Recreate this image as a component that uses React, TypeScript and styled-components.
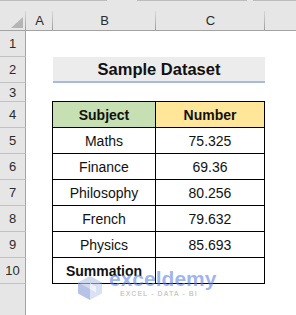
import styled, { createGlobalStyle } from 'styled-components';

const Global = createGlobalStyle`
	html, body {
		margin: 0;
		padding: 0;
		background: #ffffff;
	}
	body {
		width: 296px;
		height: 315px;
		overflow: hidden;
		font-family: 'Liberation Sans', Arial, sans-serif;
	}
`

const Sheet = styled.div`
	position: relative;
	display: grid;
	grid-template-columns: 26px 27px 103px 109px 1fr;
	grid-template-rows: 1px 30px 26px 26px 19px repeat(7, 26px) 1fr;
	width: 296px;
	height: 315px;
	overflow: hidden;
`

const TopStrip = styled.div`
	grid-column: 1 / -1;
	grid-row: 1;
	display: flex;
	background: #e6e6e6;
`

const Segment = styled.div<{ $w: number; $gap?: boolean }>`
	width: ${p => p.$w}px;
	flex: ${p => p.$w ? 'none' : '1'};
	background: ${p => p.$gap ? '#e6e6e6' : '#bcbcbc'};
`

const ColHead = styled.div<{ $col: number; $sep?: boolean }>`
	grid-row: 2;
	grid-column: ${p => p.$col};
	position: relative;
	box-sizing: border-box;
	background: #e6e6e6;
	border-bottom: 1px solid #a3a3a3;
	display: flex;
	align-items: center;
	justify-content: center;
	padding-top: 10px;
	font-size: 13px;
	color: #2b2b2b;

	&::after {
		content: '';
		display: ${p => p.$sep === false ? 'none' : 'block'};
		position: absolute;
		right: 0;
		top: 10px;
		bottom: 0;
		width: 1px;
		background: linear-gradient(#d8d8d8, #9e9e9e);
	}
`

const Corner = styled(ColHead)`
	justify-content: flex-end;
	align-items: flex-end;
	padding: 0 3px 2px 0;
`

const Triangle = styled.div`
	width: 12px;
	height: 11px;
	background: #b5b5b5;
	clip-path: polygon(100% 0, 100% 100%, 0 100%);
`

const RowHead = styled.div<{ $row: number; $last?: boolean }>`
	grid-column: 1;
	grid-row: ${p => p.$row};
	box-sizing: border-box;
	background: #e6e6e6;
	border-right: 1px solid #a3a3a3;
	border-bottom: ${p => p.$last ? 'none' : '1px solid #c2c2c2'};
	display: flex;
	align-items: center;
	justify-content: center;
	font-size: 13px;
	color: #2b2b2b;
`

const Title = styled.div`
	grid-column: 3 / 5;
	grid-row: 4;
	box-sizing: border-box;
	background: #ececec;
	border-bottom: 2px solid #a7b9e2;
	display: flex;
	align-items: center;
	justify-content: center;
	font-size: 16.5px;
	font-weight: 700;
	color: #111;
	padding-top: 1px;
`

const Table = styled.div`
	grid-column: 3 / 5;
	grid-row: 6 / 13;
	margin: -1px 0 0 -1px;
	display: grid;
	grid-template-columns: 103px 109px;
	grid-template-rows: repeat(7, 26px);
	border-top: 1px solid #000;
	border-left: 1px solid #000;
`

const Cell = styled.div<{ $bg?: string; $bold?: boolean }>`
	box-sizing: border-box;
	border-right: 1px solid #000;
	border-bottom: 1px solid #000;
	background: ${p => p.$bg || '#ffffff'};
	display: flex;
	align-items: center;
	justify-content: center;
	font-size: 14px;
	font-weight: ${p => p.$bold ? 700 : 400};
	color: #111;
	padding-top: 1px;
`

const Watermark = styled.div`
	position: absolute;
	left: 77px;
	top: 267px;
	display: flex;
	align-items: flex-start;
	gap: 6px;
	pointer-events: none;
`

const Logo = styled.svg`
	margin-top: 8px;
	flex: none;
`

const Brand = styled.div`
	display: flex;
	flex-direction: column;
	align-items: flex-start;
`

const BrandName = styled.div`
	font-family: 'Liberation Sans', sans-serif;
	font-size: 21px;
	font-weight: 700;
	line-height: 23px;
	color: rgba(95, 130, 228, 0.6);
`

const Tagline = styled.div`
	font-family: 'Liberation Sans', sans-serif;
	font-size: 7px;
	font-weight: 700;
	line-height: 8px;
	letter-spacing: 1px;
	color: rgba(150, 150, 150, 0.5);
	margin-left: 11px;
`

const rows = [
	['Maths', '75.325'],
	['Finance', '69.36'],
	['Philosophy', '80.256'],
	['French', '79.632'],
	['Physics', '85.693'],
]

export default function App() {
	return (
		<Sheet>
			<Global />
			<TopStrip>
				<Segment $w={107} />
				<Segment $w={30} $gap />
				<Segment $w={110} />
				<Segment $w={6} $gap />
				<Segment $w={0} />
			</TopStrip>

			<Corner $col={1}><Triangle /></Corner>
			<ColHead $col={2}>A</ColHead>
			<ColHead $col={3}>B</ColHead>
			<ColHead $col={4}>C</ColHead>
			<ColHead $col={5} $sep={false} />

			{Array.from({ length: 10 }, (_, i) => (
				<RowHead key={i} $row={i + 3}>{i + 1}</RowHead>
			))}
			<RowHead $row={13} $last />

			<Title>Sample Dataset</Title>

			<Table>
				<Cell $bg='#c6e0b4' $bold>Subject</Cell>
				<Cell $bg='#ffe699' $bold>Number</Cell>
				{rows.map(([name, value]) => [
					<Cell key={name}>{name}</Cell>,
					<Cell key={value}>{value}</Cell>,
				])}
				<Cell $bold>Summation</Cell>
				<Cell />
			</Table>

			<Watermark>
				<Logo width='26' height='26' viewBox='0 0 26 26'>
					<path d='M13 1 L25 7.5 L25 18.5 L13 25 L1 18.5 L1 7.5 Z' fill='rgba(150,170,220,0.35)' />
					<path d='M13 1 L25 7.5 L13 14 L1 7.5 Z' fill='rgba(200,210,235,0.45)' />
					<path d='M13 14 L13 25 L1 18.5 L1 7.5 Z' fill='rgba(130,150,210,0.4)' />
					<path d='M13 8 L19 11.5 L19 17.5 L13 14 Z' fill='rgba(255,255,255,0.6)' />
				</Logo>
				<Brand>
					<BrandName>exceldemy</BrandName>
					<Tagline>EXCEL - DATA - BI</Tagline>
				</Brand>
			</Watermark>
		</Sheet>
	)
}
